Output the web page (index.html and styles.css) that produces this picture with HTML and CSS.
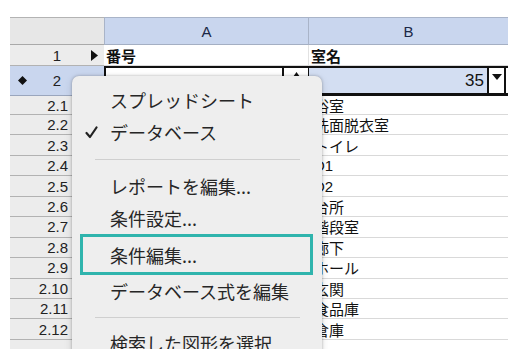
FILE: index.html
```html
<!DOCTYPE html>
<html lang="ja">
<head>
<meta charset="utf-8">
<link rel="stylesheet" href="styles.css">
</head>
<body>
<div class="sheet">
  <div class="row hdr">
    <div class="corner"></div>
    <div class="col">A</div>
    <div class="col">B</div>
  </div>
  <div class="row r1">
    <div class="rh"><span class="lbl lbl-main">1</span><span class="mk"><svg width="7" height="11" viewBox="0 0 7 11"><path d="M0 0 L7 5.5 L0 11 Z" fill="#111"/></svg></span></div>
    <div class="cell bold">番号</div>
    <div class="cell bold">室名</div>
  </div>
  <div class="row r2">
    <div class="rh sel"><span class="dia"><svg width="9" height="9" viewBox="0 0 9 9"><path d="M4.5 0 L9 4.5 L4.5 9 L0 4.5 Z" fill="#111"/></svg></span><span class="lbl lbl-main">2</span><span class="mk"></span></div>
    <div class="cell edit-a"><span class="fill"></span><span class="spin"><svg width="7" height="5" viewBox="0 0 7 5"><path d="M3.5 0 L7 5 L0 5 Z" fill="#111"/></svg></span></div>
    <div class="cell edit-b"><span class="val">35</span><span class="dd"><svg width="10" height="6" viewBox="0 0 10 6"><path d="M0 0 L10 0 L5 6 Z" fill="#111"/></svg></span></div>
  </div>
  <div class="row rn"><div class="rh"><span class="lbl">2.1</span><span class="mk"></span></div><div class="cell"></div><div class="cell data">浴室</div></div>
  <div class="row rn"><div class="rh"><span class="lbl">2.2</span><span class="mk"></span></div><div class="cell"></div><div class="cell data">洗面脱衣室</div></div>
  <div class="row rn"><div class="rh"><span class="lbl">2.3</span><span class="mk"></span></div><div class="cell"></div><div class="cell data">トイレ</div></div>
  <div class="row rn"><div class="rh"><span class="lbl">2.4</span><span class="mk"></span></div><div class="cell"></div><div class="cell data">D1</div></div>
  <div class="row rn"><div class="rh"><span class="lbl">2.5</span><span class="mk"></span></div><div class="cell"></div><div class="cell data">D2</div></div>
  <div class="row rn"><div class="rh"><span class="lbl">2.6</span><span class="mk"></span></div><div class="cell"></div><div class="cell data">台所</div></div>
  <div class="row rn"><div class="rh"><span class="lbl">2.7</span><span class="mk"></span></div><div class="cell"></div><div class="cell data">階段室</div></div>
  <div class="row rn"><div class="rh"><span class="lbl">2.8</span><span class="mk"></span></div><div class="cell"></div><div class="cell data">廊下</div></div>
  <div class="row rn"><div class="rh"><span class="lbl">2.9</span><span class="mk"></span></div><div class="cell"></div><div class="cell data">ホール</div></div>
  <div class="row rn"><div class="rh"><span class="lbl">2.10</span><span class="mk"></span></div><div class="cell"></div><div class="cell data">玄関</div></div>
  <div class="row rn"><div class="rh"><span class="lbl">2.11</span><span class="mk"></span></div><div class="cell"></div><div class="cell data">食品庫</div></div>
  <div class="row rn"><div class="rh"><span class="lbl">2.12</span><span class="mk"></span></div><div class="cell"></div><div class="cell data">倉庫</div></div>
  <div class="row rn"><div class="rh"><span class="lbl"></span><span class="mk"></span></div><div class="cell"></div><div class="cell"></div></div>
</div>

<div class="menu">
  <div class="item"><span class="chk"></span>スプレッドシート</div>
  <div class="item"><span class="chk"><svg width="13" height="13" viewBox="0 0 13 13"><path d="M1.5 7 L5 11 L11.5 1.5" fill="none" stroke="#222" stroke-width="2.2" stroke-linecap="round" stroke-linejoin="round"/></svg></span>データベース</div>
  <div class="sep"></div>
  <div class="item"><span class="chk"></span>レポートを編集...</div>
  <div class="item i4"><span class="chk"></span>条件設定...</div>
  <div class="item hl"><span class="chk"></span>条件編集...</div>
  <div class="item i6"><span class="chk"></span>データベース式を編集</div>
  <div class="sep sep2"></div>
  <div class="item i7"><span class="chk"></span>検索した図形を選択</div>
</div>
</body>
</html>
```

FILE: styles.css
```css
html, body {
  margin: 0;
  padding: 0;
}
body {
  width: 508px;
  height: 349px;
  overflow: hidden;
  position: relative;
  background: #ffffff;
  font-family: "Liberation Sans", "Noto Sans CJK JP", sans-serif;
  color: #1c1c1c;
}
.sheet {
  padding: 17px 0 0 10px;
}
.row {
  display: grid;
  grid-template-columns: 94px 204px 200px;
}
.hdr {
  height: 28px;
}
.hdr .corner {
  background: #e7e7e7;
  border-top: 1px solid #b3b3b3;
  border-bottom: 1px solid #a9a9a9;
}
.hdr .col {
  background: #c9d6ee;
  border-top: 1px solid #a9b4c8;
  border-bottom: 1px solid #a4afc3;
  border-left: 1px solid #a9b4c8;
  display: flex;
  align-items: center;
  justify-content: center;
  font-size: 15px;
  color: #1b2846;
}
.rh {
  background: #ececec;
  border-bottom: 1px solid #b2b2b2;
  display: flex;
  align-items: center;
  justify-content: flex-end;
  padding-right: 6px;
  font-size: 15px;
  color: #222;
}
.rh .mk {
  width: 30px;
  display: flex;
  justify-content: flex-end;
  align-items: center;
}
.rh .lbl-main {
  margin-right: 7px;
}
.rh.sel {
  background: #c9d6ee;
  border-bottom-color: #9aa6bd;
}
.rh .dia {
  margin-right: auto;
  margin-left: 8px;
  display: flex;
}
.cell {
  border-bottom: 1px solid #d9d9d9;
  display: flex;
  align-items: center;
  padding-left: 2px;
  font-size: 15px;
  color: #111;
  overflow: hidden;
  white-space: nowrap;
}
.cell + .cell {
  border-left: 1px solid #e2e2e2;
}
.cell.data {
  padding-left: 5px;
}
.bold {
  font-weight: bold;
}
.r1 {
  height: 21px;
}
.r2 {
  height: 30px;
}
.edit-a {
  border-top: 2px solid #111;
  border-bottom: 3px solid #111;
  border-left: 2px solid #111;
  padding-left: 0;
  background: #fff;
  align-items: stretch;
}
.edit-a .fill {
  flex: 1;
}
.edit-a .spin {
  width: 24px;
  border-left: 2px solid #111;
  display: flex;
  justify-content: center;
  align-items: flex-start;
  padding-top: 4px;
}
.cell.edit-b {
  border-top: 2px solid #111;
  border-bottom: 3px solid #111;
  border-left: 1px solid #111;
  padding-left: 0;
  align-items: stretch;
}
.edit-b .val {
  flex: 1;
  background: #d3def2;
  display: flex;
  align-items: center;
  justify-content: flex-end;
  padding-right: 3px;
  font-size: 17px;
  color: #111;
}
.edit-b .dd {
  width: 15px;
  border-left: 2px solid #111;
  border-right: 2px solid #111;
  background: #fff;
  display: flex;
  justify-content: center;
  padding-top: 6px;
  margin-right: 2px;
}
.rn {
  height: 20.45px;
}
.rn:nth-of-type(4) {
  height: 19px;
}
.menu {
  position: absolute;
  left: 72px;
  top: 76px;
  width: 250px;
  height: 300px;
  background: #eeeeee;
  border-radius: 7px 7px 0 0;
  box-shadow: 0 0 3px rgba(0, 0, 0, 0.28), 0 2px 8px rgba(0, 0, 0, 0.12);
  padding-top: 8px;
  box-sizing: border-box;
  font-family: "Noto Sans CJK JP", sans-serif;
  font-size: 18px;
  color: #262626;
}
.item {
  height: 32px;
  display: flex;
  align-items: center;
  padding-left: 13px;
  white-space: nowrap;
}
.chk {
  width: 25px;
  display: flex;
  align-items: center;
}
.sep {
  height: 22px;
  display: flex;
  align-items: center;
  margin: 0 22px 0 23px;
}
.sep::before {
  content: "";
  flex: 1;
  height: 1px;
  background: #cfcfcf;
}
.hl {
  height: 41px;
  box-sizing: border-box;
  border: 3px solid #2fb4ad;
  margin: 0 9px 0 8px;
  padding-left: 2px;
}
.i6 {
  height: 31px;
}
.sep2 {
  height: 22px;
}
.i7 {
  height: 30px;
}
```
